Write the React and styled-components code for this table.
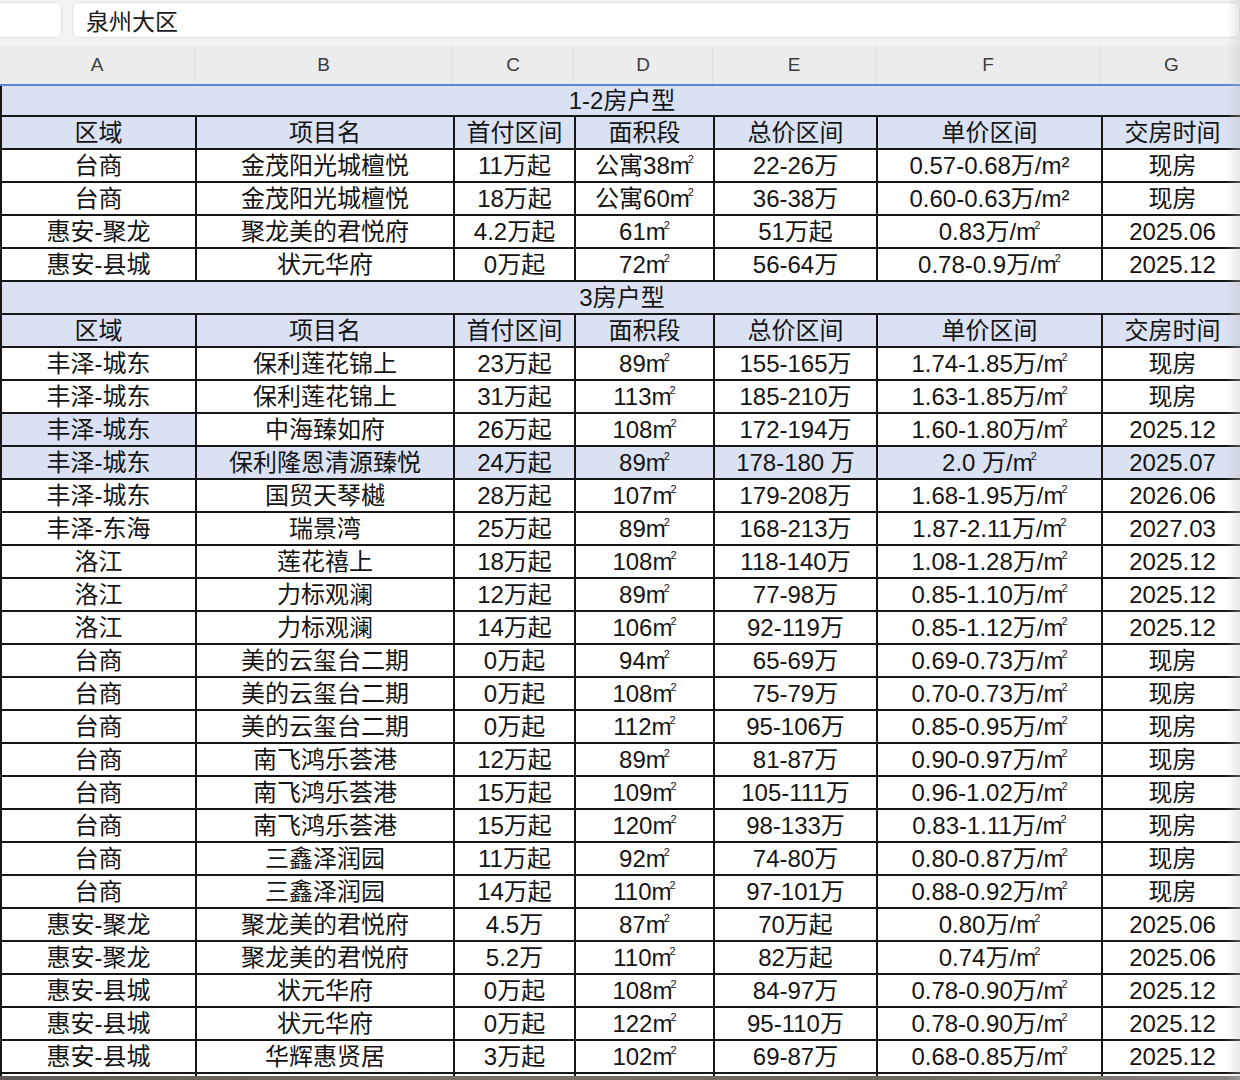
import React from "react";
import styled, { createGlobalStyle } from "styled-components";

const GlobalStyle = createGlobalStyle`
  html, body {
    margin: 0;
    padding: 0;
    background: #ffffff;
  }
  body {
    font-family: "Liberation Sans", "Noto Sans CJK SC", sans-serif;
  }
`;

const COLS = [195, 258, 121, 139, 163, 225, 141];
const LETTERS = ["A", "B", "C", "D", "E", "F", "G"];
const HEAD = ["区域", "项目名", "首付区间", "面积段", "总价区间", "单价区间", "交房时间"];

const small = [
  ["台商", "金茂阳光城檀悦", "11万起", "公寓38㎡", "22-26万", "0.57-0.68万/m²", "现房"],
  ["台商", "金茂阳光城檀悦", "18万起", "公寓60㎡", "36-38万", "0.60-0.63万/m²", "现房"],
  ["惠安-聚龙", "聚龙美的君悦府", "4.2万起", "61㎡", "51万起", "0.83万/㎡", "2025.06"],
  ["惠安-县城", "状元华府", "0万起", "72㎡", "56-64万", "0.78-0.9万/㎡", "2025.12"],
];

const three = [
  ["丰泽-城东", "保利莲花锦上", "23万起", "89㎡", "155-165万", "1.74-1.85万/㎡", "现房"],
  ["丰泽-城东", "保利莲花锦上", "31万起", "113㎡", "185-210万", "1.63-1.85万/㎡", "现房"],
  ["丰泽-城东", "中海臻如府", "26万起", "108㎡", "172-194万", "1.60-1.80万/㎡", "2025.12", "first"],
  ["丰泽-城东", "保利隆恩清源臻悦", "24万起", "89㎡", "178-180 万", "2.0 万/㎡", "2025.07", "all"],
  ["丰泽-城东", "国贸天琴樾", "28万起", "107㎡", "179-208万", "1.68-1.95万/㎡", "2026.06"],
  ["丰泽-东海", "瑞景湾", "25万起", "89㎡", "168-213万", "1.87-2.11万/㎡", "2027.03"],
  ["洛江", "莲花禧上", "18万起", "108㎡", "118-140万", "1.08-1.28万/㎡", "2025.12"],
  ["洛江", "力标观澜", "12万起", "89㎡", "77-98万", "0.85-1.10万/㎡", "2025.12"],
  ["洛江", "力标观澜", "14万起", "106㎡", "92-119万", "0.85-1.12万/㎡", "2025.12"],
  ["台商", "美的云玺台二期", "0万起", "94㎡", "65-69万", "0.69-0.73万/㎡", "现房"],
  ["台商", "美的云玺台二期", "0万起", "108㎡", "75-79万", "0.70-0.73万/㎡", "现房"],
  ["台商", "美的云玺台二期", "0万起", "112㎡", "95-106万", "0.85-0.95万/㎡", "现房"],
  ["台商", "南飞鸿乐荟港", "12万起", "89㎡", "81-87万", "0.90-0.97万/㎡", "现房"],
  ["台商", "南飞鸿乐荟港", "15万起", "109㎡", "105-111万", "0.96-1.02万/㎡", "现房"],
  ["台商", "南飞鸿乐荟港", "15万起", "120㎡", "98-133万", "0.83-1.11万/㎡", "现房"],
  ["台商", "三鑫泽润园", "11万起", "92㎡", "74-80万", "0.80-0.87万/㎡", "现房"],
  ["台商", "三鑫泽润园", "14万起", "110㎡", "97-101万", "0.88-0.92万/㎡", "现房"],
  ["惠安-聚龙", "聚龙美的君悦府", "4.5万", "87㎡", "70万起", "0.80万/㎡", "2025.06"],
  ["惠安-聚龙", "聚龙美的君悦府", "5.2万", "110㎡", "82万起", "0.74万/㎡", "2025.06"],
  ["惠安-县城", "状元华府", "0万起", "108㎡", "84-97万", "0.78-0.90万/㎡", "2025.12"],
  ["惠安-县城", "状元华府", "0万起", "122㎡", "95-110万", "0.78-0.90万/㎡", "2025.12"],
  ["惠安-县城", "华辉惠贤居", "3万起", "102㎡", "69-87万", "0.68-0.85万/㎡", "2025.12"],
  ["惠安-县城", "华辉惠贤居", "3万起", "120㎡", "80-98万", "0.67-0.82万/㎡", "2025.12"],
];

const Page = styled.div`
  width: 1240px;
  height: 1080px;
  overflow: hidden;
  display: flex;
  flex-direction: column;
  background: #ffffff;
  position: relative;
`;

const Toolbar = styled.div`
  height: 46px;
  flex: none;
  display: flex;
  gap: 10px;
  padding: 2px 0 0 0;
  box-sizing: border-box;
  background: #f2f2f2;
  margin-left: -10px;
`;

const Field = styled.div`
  height: 36px;
  box-sizing: border-box;
  background: #ffffff;
  border: 1px solid #e2e2e2;
  border-radius: 7px;
  width: ${(p) => p.$w}px;
  flex: ${(p) => (p.$grow ? "1 0 auto" : "none")};
  display: flex;
  align-items: center;
  padding-left: 13px;
  font-size: 23px;
  color: #1a1a1a;
  font-family: "Noto Sans CJK SC", sans-serif;
`;

const ColBar = styled.div`
  height: 40px;
  flex: none;
  display: grid;
  grid-template-columns: ${COLS.map((c) => c + "px").join(" ")};
  background: #ececec;
  border-bottom: 2px solid #5a86d6;
  box-sizing: border-box;
`;

const ColLetter = styled.div`
  display: flex;
  align-items: center;
  justify-content: center;
  font-size: 19px;
  color: #3c3c3c;
  border-right: 1px solid #dedede;
  &:last-child {
    border-right: none;
  }
`;

const TableWrap = styled.div`
  flex: 1;
  overflow: hidden;
`;

const Table = styled.table`
  border-collapse: collapse;
  table-layout: fixed;
  width: 1242px;
`;

const Row = styled.tr`
  height: ${(p) => p.$h || 33}px;
`;

const Cell = styled.td`
  border: 2px solid #161616;
  padding: 0;
  text-align: center;
  vertical-align: middle;
  font-size: 24px;
  line-height: 28px;
  color: #141414;
  white-space: nowrap;
  background: ${(p) => (p.$hl ? "#d9e1f2" : "#ffffff")};
  font-family: "Liberation Sans", "Noto Sans CJK SC", sans-serif;
`;

const Section = styled.td`
  border: 2px solid #161616;
  border-top: none;
  padding: 0;
  text-align: center;
  vertical-align: middle;
  font-size: 24px;
  line-height: 26px;
  color: #141414;
  background: #d9e1f2;
  font-family: "Liberation Sans", "Noto Sans CJK SC", sans-serif;
`;

const Sq = styled.span`
  white-space: nowrap;
  sup {
    font-size: 11px;
    line-height: 0;
    vertical-align: 11px;
    margin-left: -2px;
  }
`;

const BottomStrip = styled.div`
  height: 4px;
  flex: none;
  background: linear-gradient(90deg, #5f5a55, #7a716a 40%, #6b655f 70%, #8a8480);
`;

const EdgeShade = styled.div`
  position: absolute;
  top: 0;
  right: 0;
  width: 14px;
  height: 100%;
  background: linear-gradient(90deg, rgba(200, 200, 200, 0), rgba(190, 190, 190, 0.35));
  pointer-events: none;
`;

const renderText = (t) => {
  if (!t.includes("㎡")) return t;
  const [before, after] = t.split("㎡");
  return (
    <>
      {before}
      <Sq>
        m<sup>2</sup>
      </Sq>
      {after}
    </>
  );
};

const DataRow = ({ row }) => {
  const hl = row[7];
  return (
    <Row>
      {row.slice(0, 7).map((v, i) => (
        <Cell key={i} $hl={hl === "all" || (hl === "first" && i === 0)}>
          {renderText(v)}
        </Cell>
      ))}
    </Row>
  );
};

const HeadRow = () => (
  <Row>
    {HEAD.map((h) => (
      <Cell key={h} $hl>
        {h}
      </Cell>
    ))}
  </Row>
);

export default function App() {
  return (
    <Page>
      <GlobalStyle />
      <Toolbar>
        <Field $w={72} />
        <Field $grow>泉州大区</Field>
      </Toolbar>
      <ColBar>
        {LETTERS.map((l) => (
          <ColLetter key={l}>{l}</ColLetter>
        ))}
      </ColBar>
      <TableWrap>
        <Table>
          <colgroup>
            {COLS.map((c, i) => (
              <col key={i} style={{ width: c }} />
            ))}
          </colgroup>
          <tbody>
            <Row $h={30}>
              <Section colSpan={7}>1-2房户型</Section>
            </Row>
            <HeadRow />
            {small.map((r, i) => (
              <DataRow key={"s" + i} row={r} />
            ))}
            <Row>
              <Section colSpan={7}>3房户型</Section>
            </Row>
            <HeadRow />
            {three.map((r, i) => (
              <DataRow key={"t" + i} row={r} />
            ))}
          </tbody>
        </Table>
      </TableWrap>
      <BottomStrip />
      <EdgeShade />
    </Page>
  );
}
